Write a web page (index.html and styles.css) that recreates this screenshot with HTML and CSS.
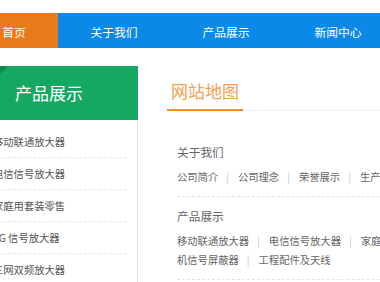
FILE: index.html
```html
<!DOCTYPE html>
<html lang="zh-CN">
<head>
    <meta charset="UTF-8">
    <meta name="viewport" content="width=device-width, initial-scale=1.0">
    <title>网站地图</title>
    <link rel="stylesheet" href="styles.css">
</head>
<body>
    <nav class="nav">
        <ul class="nav-list">
            <li class="nav-item active"><a href="#">首页</a></li>
            <li class="nav-item"><a href="#">关于我们</a></li>
            <li class="nav-item"><a href="#">产品展示</a></li>
            <li class="nav-item"><a href="#">新闻中心</a></li>
            <li class="nav-item"><a href="#">联系我们</a></li>
        </ul>
    </nav>

    <div class="main">
        <aside class="sidebar">
            <h2 class="side-title">产品展示</h2>
            <ul class="side-list">
                <li><a href="#">移动联通放大器</a></li>
                <li><a href="#">电信信号放大器</a></li>
                <li><a href="#">家庭用套装零售</a></li>
                <li><a href="#">3G 信号放大器</a></li>
                <li><a href="#">三网双频放大器</a></li>
            </ul>
        </aside>

        <section class="content">
            <h1 class="page-title"><span>网站地图</span></h1>

            <div class="map">
                <div class="map-group">
                    <h3>关于我们</h3>
                    <p class="map-links">
                        <a href="#">公司简介</a><a href="#">公司理念</a><a href="#">荣誉展示</a><a href="#">生产设备</a><a href="#">企业文化</a>
                    </p>
                </div>
                <div class="map-group">
                    <h3>产品展示</h3>
                    <p class="map-links">
                        <a href="#">移动联通放大器</a><a href="#">电信信号放大器</a><a href="#">家庭用套装零售</a><a href="#">3G 信号放大器</a><a href="#">三网双频放大器</a><a href="#">手机信号屏蔽器</a><a href="#">工程配件及天线</a>
                    </p>
                </div>
            </div>
        </section>
    </div>
</body>
</html>
```

FILE: styles.css
```css
/* General Styles */
* {
    margin: 0;
    padding: 0;
    box-sizing: border-box;
}

body {
    font-family: "Noto Sans CJK SC", "Noto Sans", sans-serif;
    background: #fff;
    color: #555;
    overflow: hidden;
}

a {
    color: inherit;
    text-decoration: none;
}

ul {
    list-style: none;
}

/* Navigation */
.nav {
    margin-top: 13px;
    height: 35px;
    background: #0a89e9;
    overflow: hidden;
}

.nav-list {
    display: flex;
    margin-left: -30px;
}

.nav-item {
    flex: 0 0 112px;
    height: 35px;
    line-height: 35px;
    padding-top: 1px;
    text-align: center;
    font-size: 11.8px;
    color: #fff;
}

.nav-item.active {
    flex-basis: 88px;
    background: #e87a1b;
}

/* Layout */
.main {
    display: flex;
    align-items: flex-start;
    margin-top: 18px;
}

/* Sidebar */
.sidebar {
    flex: 0 0 158px;
    margin-left: -20px;
}

.side-title {
    position: relative;
    height: 54px;
    line-height: 54px;
    padding-left: 35px;
    font-size: 17px;
    font-weight: normal;
    color: #fff;
    background: #15a862;
}

.side-title::before {
    content: "";
    position: absolute;
    left: 20px;
    top: 0;
    border-top: 8px solid #0e8a4e;
    border-right: 8px solid transparent;
}

.side-list {
    padding: 6px 10px 40px 13px;
    border-right: 1px solid #e6e6e6;
}

.side-list li {
    height: 32px;
    line-height: 31px;
    font-size: 10.3px;
    color: #555;
    border-bottom: 1px dashed #e6e6e6;
}

/* Content */
.content {
    flex: 1;
    min-width: 0;
    margin-left: 29px;
}

.page-title {
    display: flex;
    padding-top: 9px;
    font-size: 17px;
    font-weight: normal;
    border-bottom: 1px solid #ececec;
}

.page-title span {
    line-height: 32px;
    padding: 0 4px 2px;
    margin-bottom: -1px;
    color: #f7a04c;
    border-bottom: 2px solid #f39019;
}

.map {
    margin-top: 22px;
    width: 487px;
}

.map-group {
    margin: 0 10px;
    padding: 9px 0 10px;
    border-bottom: 1px dashed #e3e3e3;
}

.map-group h3 {
    line-height: 20px;
    margin-bottom: 5px;
    font-size: 11.7px;
    font-weight: normal;
    color: #666;
}

.map-links {
    line-height: 19px;
    font-size: 10.3px;
    color: #666;
}

.map-links a + a::before {
    content: "|";
    margin: 0 9px 0 8px;
    color: #c8c8c8;
}
```
